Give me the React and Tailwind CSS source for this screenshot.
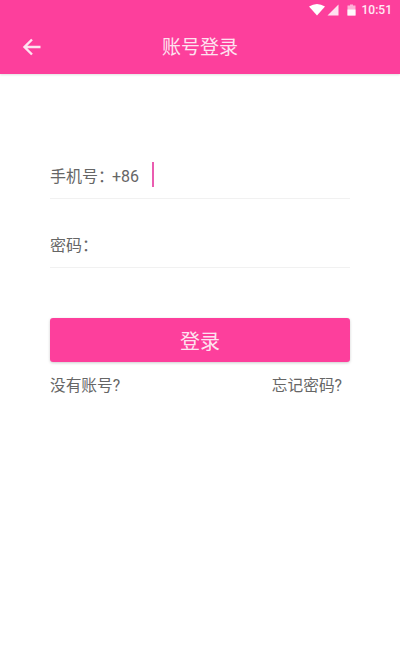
function StatusBar() {
  return (
    <div className="h-[20px] flex items-center justify-end pr-[8px]">
      {/* wifi */}
      <svg width="16" height="12" viewBox="0 0 16 12" className="-ml-[1px]">
        <path d="M0 2.5 Q8 -2.5 16 2.5 L8 11.5 Z" fill="#fff" />
      </svg>
      {/* signal */}
      <svg width="12" height="12" viewBox="0 0 12 12" className="ml-[2px]">
        <path d="M0.5 11.5 L11.5 0.5 V11.5 Z" fill="#fff" fillOpacity="0.85" />
      </svg>
      {/* battery */}
      <svg width="9" height="12" viewBox="0 0 9 12" className="ml-[8px]">
        <path d="M3 0.5 H6 V1.5 H8.5 V11.5 H0.5 V1.5 H3 Z" fill="#fff" fillOpacity="0.6" />
        <path d="M0.5 5.5 H8.5 V11.5 H0.5 Z" fill="#fff" fillOpacity="0.95" />
      </svg>
      <span className="ml-[6px] text-[12px] font-medium text-white/90 font-['Roboto',sans-serif]">10:51</span>
    </div>
  );
}

function Field({ label, children }) {
  return (
    <div className="h-[46px] flex items-center border-b border-[#f1f1f1] text-[16px] text-[#666] pt-[2px]">
      <span>{label}</span>
      {children}
    </div>
  );
}

export default function App() {
  return (
    <div className="w-[400px] h-[661px] bg-white font-['Roboto','Noto_Sans_CJK_SC',sans-serif]">
      <div className="h-[74px] bg-[#fd3f9c] shadow-[0_1px_2px_rgba(0,0,0,0.12)]">
        <StatusBar />
        <div className="relative h-[54px] flex items-center justify-center pt-[3px]">
          <svg width="20" height="18" viewBox="0 0 20 18" className="absolute left-[22px] top-[18px]" fill="none">
            <path d="M18.5 9 H3 M10 1.5 L2.5 9 L10 16.5" stroke="#fde3f0" strokeWidth="2.4" />
          </svg>
          <span className="text-[19px] text-[#fde3f0]">账号登录</span>
        </div>
      </div>

      <div className="px-[50px] pt-[79px]">
        <Field label="手机号：">
          <span className="-ml-[2px]">+86</span>
          <span className="ml-[13px] -mt-[5px] w-[2px] h-[25px] bg-[#ea5cb0]" />
        </Field>
        <div className="mt-[23px]">
          <Field label="密码：" />
        </div>

        <button className="mt-[50px] w-full h-[44px] pt-[3px] rounded-[3px] bg-[#fd3f9c] text-[#fde3f0] text-[20px] shadow-[0_1px_3px_rgba(0,0,0,0.2)]">
          登录
        </button>

        <div className="mt-[12px] flex justify-between pr-[8px] text-[15.7px] text-[#666]">
          <span>没有账号?</span>
          <span>忘记密码?</span>
        </div>
      </div>
    </div>
  );
}
